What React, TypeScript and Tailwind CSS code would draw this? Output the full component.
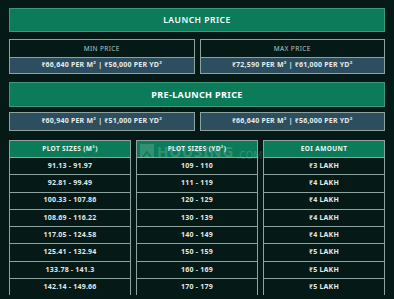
const font = { fontFamily: '"Noto Sans", "DejaVu Sans", sans-serif' };

const plotM = [
  "91.13 - 91.97",
  "92.81 - 99.49",
  "100.33 - 107.86",
  "108.69 - 116.22",
  "117.05 - 124.58",
  "125.41 - 132.94",
  "133.78 - 141.3",
  "142.14 - 149.66",
];

const plotY = [
  "109 - 110",
  "111 - 119",
  "120 - 129",
  "130 - 139",
  "140 - 149",
  "150 - 159",
  "160 - 169",
  "170 - 179",
];

const eoi = [
  "₹3 LAKH",
  "₹4 LAKH",
  "₹4 LAKH",
  "₹4 LAKH",
  "₹4 LAKH",
  "₹5 LAKH",
  "₹5 LAKH",
  "₹5 LAKH",
];

function PriceBox({ label, value }: { label: string; value: string }) {
  return (
    <div className="border border-[#8fa39e] flex flex-col">
      <div className="h-[17px] flex items-center justify-center text-[6.5px] tracking-[0.06em] text-[#b9c6c2]">
        {label}
      </div>
      <div className="h-[16px] border-t border-[#8fa39e] bg-[#2d4e5f] flex items-center justify-center text-[7px] font-bold tracking-[0.03em] text-[#e6ecea]">
        {value}
      </div>
    </div>
  );
}

function ValueBox({ value }: { value: string }) {
  return (
    <div className="h-[19px] border border-[#8fa39e] bg-[#2d4e5f] flex items-center justify-center text-[7px] font-bold tracking-[0.03em] text-[#e6ecea]">
      {value}
    </div>
  );
}

function Column({ title, rows }: { title: string; rows: string[] }) {
  return (
    <div className="border-x border-[#8fa39e] flex flex-col">
      <div className="h-[17px] border-t border-[#8fa39e] bg-[#0c7b59] flex items-center justify-center text-[6.5px] font-bold tracking-[0.06em] text-[#eef5f2]">
        {title}
      </div>
      {rows.map((r, i) => (
        <div
          key={i}
          className="h-[17.3px] border-t border-[#8fa39e] flex items-center justify-center text-[7px] font-bold tracking-[0.03em] text-[#e3e9e7]"
        >
          {r}
        </div>
      ))}
    </div>
  );
}

export default function App() {
  return (
    <div
      className="relative w-[394px] h-[299px] overflow-hidden bg-[#051a16] px-[9px] pt-[8px]"
      style={font}
    >
      <div className="h-[24px] border border-[#3f9878] bg-[#0c7b59] flex items-center justify-center text-[8.5px] font-semibold tracking-[0.06em] text-white">
        LAUNCH PRICE
      </div>

      <div className="mt-[7px] grid grid-cols-2 gap-[5px]">
        <PriceBox label="MIN PRICE" value="₹66,640 PER M²  |  ₹56,000 PER YD²" />
        <PriceBox label="MAX PRICE" value="₹72,590 PER M²  |  ₹61,000 PER YD²" />
      </div>

      <div className="mt-[8px] h-[25px] border border-[#3f9878] bg-[#0c7b59] flex items-center justify-center text-[9px] font-bold tracking-[0.04em] text-white">
        PRE-LAUNCH PRICE
      </div>

      <div className="mt-[5px] grid grid-cols-2 gap-[5px]">
        <ValueBox value="₹60,940 PER M²  |  ₹51,000 PER YD²" />
        <ValueBox value="₹66,640 PER M²  |  ₹56,000 PER YD²" />
      </div>

      <div className="mt-[9px] grid grid-cols-3 gap-[5px]">
        <Column title="PLOT SIZES (M²)" rows={plotM} />
        <Column title="PLOT SIZES (YD²)" rows={plotY} />
        <Column title="EOI AMOUNT" rows={eoi} />
      </div>

      <div className="absolute left-[140px] top-[140px] flex items-center gap-[3px] opacity-20 pointer-events-none">
        <div className="w-[14px] h-[14px] bg-[#cfe3dc] flex items-end justify-center">
          <svg width="10" height="8" viewBox="0 0 10 8">
            <path d="M1 7 L5 2 L9 7" stroke="#0c7b59" strokeWidth="1.6" fill="none" />
          </svg>
        </div>
        <span className="text-[15px] font-bold tracking-[0.05em] text-[#cfe3dc]">
          HOUSING
        </span>
        <span className="text-[10px] text-[#cfe3dc] self-end">.COM</span>
      </div>
    </div>
  );
}
